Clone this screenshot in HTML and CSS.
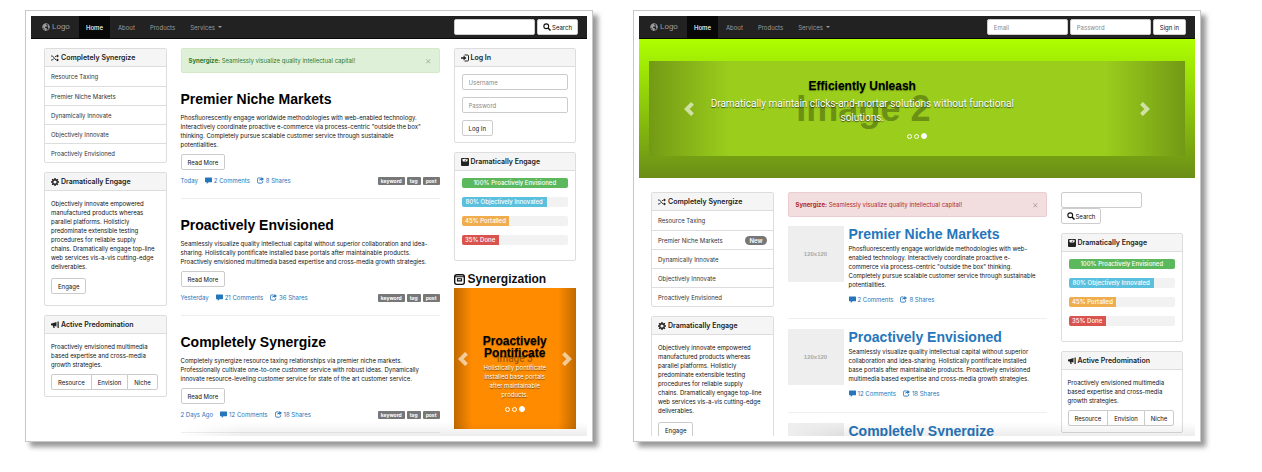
FILE: index.html
```html
<!DOCTYPE html>
<html lang="en">
<head>
<meta charset="utf-8">
<title>Layout templates</title>
<link rel="stylesheet" href="styles.css">
</head>
<body>
<svg class="sprite" aria-hidden="true">
  <symbol id="globe" viewBox="0 0 16 16"><circle cx="8" cy="8" r="6.8" fill="none" stroke="currentColor" stroke-width="1.6"/><path fill="currentColor" d="M2 5l3-3 4-1-1 3 2 1-1 2-3 1 1 2 3 1-1 3-2 2-2-3-1-3-3-2zM12 3l3 4-1 4-2-2-1-3z"/></symbol>
  <symbol id="random" viewBox="0 0 16 16"><path fill="none" stroke="currentColor" stroke-width="1.8" d="M0 4h3l7 8h3M0 12h3l2.500-3M8 6l2-2h3"/><path fill="currentColor" d="M12 1l4 3-4 3zM12 9l4 3-4 3z"/></symbol>
  <symbol id="cog" viewBox="0 0 16 16"><circle cx="8" cy="8" r="4.500" fill="none" stroke="currentColor" stroke-width="2.600"/><path stroke="currentColor" stroke-width="2.800" d="M8 0v3M8 13v3M0 8h3M13 8h3M2.300 2.300l2 2M11.700 11.700l2 2M2.300 13.700l2-2M11.700 4.300l2-2"/></symbol>
  <symbol id="horn" viewBox="0 0 16 16"><path fill="currentColor" d="M0 5l3-.5L11 2v9L6.500 9.800 7.500 14H5L3.500 9 0 8.500zM13 1h2.500v13H13z"/></symbol>
  <symbol id="search" viewBox="0 0 16 16"><circle cx="6.500" cy="6.500" r="4.800" fill="none" stroke="currentColor" stroke-width="2.200"/><path stroke="currentColor" stroke-width="3" d="M10 10l5 5"/></symbol>
  <symbol id="login" viewBox="0 0 16 16"><path fill="none" stroke="currentColor" stroke-width="2" d="M7 2h6q2 0 2 2v8q0 2-2 2H7"/><path fill="currentColor" d="M0 6.500h5V3l6 5-6 5V9.500H0z"/></symbol>
  <symbol id="scale" viewBox="0 0 16 16"><path fill="currentColor" fill-rule="evenodd" d="M2 0h12q2 0 2 2v12q0 2-2 2H2q-2 0-2-2V2q0-2 2-2zM2 3l2 4h8l2-4q-6-3-12 0z"/><path stroke="currentColor" stroke-width="1.500" d="M8 6l2-3"/></symbol>
  <symbol id="box" viewBox="0 0 16 16"><rect x="1" y="1" width="14" height="14" rx="3" fill="none" stroke="currentColor" stroke-width="2"/><path fill="none" stroke="currentColor" stroke-width="1.500" d="M1 4h14M5 7h6v3H5z"/></symbol>
  <symbol id="comment" viewBox="0 0 16 16"><path fill="currentColor" d="M1 1h14q1 0 1 1v9q0 1-1 1H8l-4 4v-4H1q-1 0-1-1V2q0-1 1-1z"/></symbol>
  <symbol id="share" viewBox="0 0 16 16"><path fill="none" stroke="currentColor" stroke-width="2" d="M8 2H4Q1 2 1 5v6q0 3 3 3h6q3 0 3-3V9"/><path fill="currentColor" d="M10 0l6 4.500L10 9V6q-3 0-5 3 0-6 5-6z"/></symbol>
  <symbol id="left" viewBox="0 0 16 16"><path fill="none" stroke="currentColor" stroke-width="4.500" d="M12 1.500L5.500 8l6.500 6.500"/></symbol>
  <symbol id="right" viewBox="0 0 16 16"><path fill="none" stroke="currentColor" stroke-width="4.500" d="M4 1.500L10.500 8 4 14.500"/></symbol>
</svg>

<section class="shot">
  <div class="screen">
    <header class="navbar">
      <a class="brand" href="#"><svg class="icon"><use href="#globe"/></svg>Logo</a>
      <nav class="nav"><a class="active" href="#">Home</a><a href="#">About</a><a href="#">Products</a><a href="#">Services <span class="caret"></span></a></nav>
      <form class="navform"><input class="field" type="text" aria-label="Search"><button class="btn find" type="button"><svg class="icon"><use href="#search"/></svg> Search</button></form>
    </header>
    <main class="columns first">
      <aside class="stack">
        <section class="panel">
          <h3 class="head"><svg class="icon"><use href="#random"/></svg>Completely Synergize</h3>
          <ul class="list"><li><a href="#">Resource Taxing</a></li><li><a href="#">Premier Niche Markets</a></li><li><a href="#">Dynamically Innovate</a></li><li><a href="#">Objectively Innovate</a></li><li><a href="#">Proactively Envisioned</a></li></ul>
        </section>
        <section class="panel">
          <h3 class="head"><svg class="icon"><use href="#cog"/></svg>Dramatically Engage</h3>
          <div class="body long"><p>Objectively innovate empowered<br>manufactured products whereas<br>parallel platforms. Holisticly<br>predominate extensible testing<br>procedures for reliable supply<br>chains. Dramatically engage top-line<br>web services vis-a-vis cutting-edge<br>deliverables.</p><button class="btn" type="button">Engage</button></div>
        </section>
        <section class="panel">
          <h3 class="head"><svg class="icon"><use href="#horn"/></svg>Active Predomination</h3>
          <div class="body"><p>Proactively envisioned multimedia<br>based expertise and cross-media<br>growth strategies.</p><div class="group"><button class="btn" type="button">Resource</button><button class="btn" type="button">Envision</button><button class="btn" type="button">Niche</button></div></div>
        </section>
      </aside>
      <div class="main">
        <div class="alert success"><span><b>Synergize:</b> Seamlessly visualize quality intellectual capital!</span><button class="close" type="button" aria-label="Close">×</button></div>
        <article class="post">
          <h2>Premier Niche Markets</h2>
          <p>Phosfluorescently engage worldwide methodologies with web-enabled technology.<br>Interactively coordinate proactive e-commerce via process-centric "outside the box"<br>thinking. Completely pursue scalable customer service through sustainable<br>potentialities.</p>
          <button class="btn" type="button">Read More</button>
          <div class="meta"><a href="#">Today</a><a href="#"><svg class="icon"><use href="#comment"/></svg>2 Comments</a><a href="#"><svg class="icon"><use href="#share"/></svg>8 Shares</a><span class="tags"><span>keyword</span><span>tag</span><span>post</span></span></div>
        </article>
        <article class="post">
          <h2>Proactively Envisioned</h2>
          <p>Seamlessly visualize quality intellectual capital without superior collaboration and idea-<br>sharing. Holistically pontificate installed base portals after maintainable products.<br>Proactively envisioned multimedia based expertise and cross-media growth strategies.</p>
          <button class="btn" type="button">Read More</button>
          <div class="meta"><a href="#">Yesterday</a><a href="#"><svg class="icon"><use href="#comment"/></svg>21 Comments</a><a href="#"><svg class="icon"><use href="#share"/></svg>36 Shares</a><span class="tags"><span>keyword</span><span>tag</span><span>post</span></span></div>
        </article>
        <article class="post">
          <h2>Completely Synergize</h2>
          <p>Completely synergize resource taxing relationships via premier niche markets.<br>Professionally cultivate one-to-one customer service with robust ideas. Dynamically<br>innovate resource-leveling customer service for state of the art customer service.</p>
          <button class="btn" type="button">Read More</button>
          <div class="meta"><a href="#">2 Days Ago</a><a href="#"><svg class="icon"><use href="#comment"/></svg>12 Comments</a><a href="#"><svg class="icon"><use href="#share"/></svg>18 Shares</a><span class="tags"><span>keyword</span><span>tag</span><span>post</span></span></div>
        </article>
      </div>
      <aside class="stack">
        <section class="panel">
          <h3 class="head"><svg class="icon"><use href="#login"/></svg>Log In</h3>
          <form class="body login"><input class="field" type="text" placeholder="Username" aria-label="Username"><input class="field" type="password" placeholder="Password" aria-label="Password"><button class="btn" type="button">Log In</button></form>
        </section>
        <section class="panel">
          <h3 class="head"><svg class="icon"><use href="#scale"/></svg>Dramatically Engage</h3>
          <div class="body bars"><div class="bar"><span class="green" style="width:100%">100% Proactively Envisioned</span></div><div class="bar"><span class="blue" style="width:80%">80% Objectively Innovated</span></div><div class="bar"><span class="amber" style="width:45%">45% Portalled</span></div><div class="bar"><span class="red" style="width:35%">35% Done</span></div></div>
        </section>
        <section class="feature">
          <h3 class="title"><svg class="icon"><use href="#box"/></svg>Synergization</h3>
          <div class="carousel small">
            <span class="image">Image 3</span>
            <button class="arrow" type="button" aria-label="Previous"><svg class="icon"><use href="#left"/></svg></button>
            <div class="caption"><h4>Proactively Pontificate</h4><p>Holistically pontificate<br>installed base portals<br>after maintainable<br>products.</p></div>
            <button class="arrow next" type="button" aria-label="Next"><svg class="icon"><use href="#right"/></svg></button>
            <div class="dots"><i></i><i></i><i class="on"></i></div>
          </div>
        </section>
      </aside>
    </main>
  </div>
</section>

<section class="shot">
  <div class="screen">
    <header class="navbar">
      <a class="brand" href="#"><svg class="icon"><use href="#globe"/></svg>Logo</a>
      <nav class="nav"><a class="active" href="#">Home</a><a href="#">About</a><a href="#">Products</a><a href="#">Services <span class="caret"></span></a></nav>
      <form class="navform"><input class="field" type="text" placeholder="Email" aria-label="Email"><input class="field" type="password" placeholder="Password" aria-label="Password"><button class="btn" type="button">Sign in</button></form>
    </header>
    <div class="hero">
      <div class="carousel wide">
        <span class="image">Image 2</span>
        <button class="arrow" type="button" aria-label="Previous"><svg class="icon"><use href="#left"/></svg></button>
        <div class="caption"><h4>Efficiently Unleash</h4><p>Dramatically maintain clicks-and-mortar solutions without functional<br>solutions.</p></div>
        <button class="arrow next" type="button" aria-label="Next"><svg class="icon"><use href="#right"/></svg></button>
        <div class="dots"><i></i><i></i><i class="on"></i></div>
      </div>
    </div>
    <main class="columns second">
      <aside class="stack">
        <section class="panel">
          <h3 class="head"><svg class="icon"><use href="#random"/></svg>Completely Synergize</h3>
          <ul class="list"><li><a href="#">Resource Taxing</a></li><li><a href="#">Premier Niche Markets</a><span class="badge">New</span></li><li><a href="#">Dynamically Innovate</a></li><li><a href="#">Objectively Innovate</a></li><li><a href="#">Proactively Envisioned</a></li></ul>
        </section>
        <section class="panel">
          <h3 class="head"><svg class="icon"><use href="#cog"/></svg>Dramatically Engage</h3>
          <div class="body long"><p>Objectively innovate empowered<br>manufactured products whereas<br>parallel platforms. Holisticly<br>predominate extensible testing<br>procedures for reliable supply<br>chains. Dramatically engage top-line<br>web services vis-a-vis cutting-edge<br>deliverables.</p><button class="btn" type="button">Engage</button></div>
        </section>
      </aside>
      <div class="main">
        <div class="alert danger"><span><b>Synergize:</b> Seamlessly visualize quality intellectual capital!</span><button class="close" type="button" aria-label="Close">×</button></div>
        <article class="media">
          <div class="thumb">120x120</div>
          <div class="text">
            <h2><a href="#">Premier Niche Markets</a></h2>
            <p>Phosfluorescently engage worldwide methodologies with web-<br>enabled technology. Interactively coordinate proactive e-<br>commerce via process-centric "outside the box" thinking.<br>Completely pursue scalable customer service through sustainable<br>potentialities.</p>
            <div class="meta"><a href="#"><svg class="icon"><use href="#comment"/></svg>2 Comments</a><a href="#"><svg class="icon"><use href="#share"/></svg>8 Shares</a></div>
          </div>
        </article>
        <article class="media">
          <div class="thumb">120x120</div>
          <div class="text">
            <h2><a href="#">Proactively Envisioned</a></h2>
            <p>Seamlessly visualize quality intellectual capital without superior<br>collaboration and idea-sharing. Holistically pontificate installed<br>base portals after maintainable products. Proactively envisioned<br>multimedia based expertise and cross-media growth strategies.</p>
            <div class="meta"><a href="#"><svg class="icon"><use href="#comment"/></svg>12 Comments</a><a href="#"><svg class="icon"><use href="#share"/></svg>18 Shares</a></div>
          </div>
        </article>
        <article class="media">
          <div class="thumb"></div>
          <div class="text"><h2><a href="#">Completely Synergize</a></h2></div>
        </article>
      </div>
      <aside class="stack">
        <form class="search"><input class="field" type="text" aria-label="Search"><button class="btn find" type="button"><svg class="icon"><use href="#search"/></svg> Search</button></form>
        <section class="panel">
          <h3 class="head"><svg class="icon"><use href="#scale"/></svg>Dramatically Engage</h3>
          <div class="body bars"><div class="bar"><span class="green" style="width:100%">100% Proactively Envisioned</span></div><div class="bar"><span class="blue" style="width:80%">80% Objectively Innovated</span></div><div class="bar"><span class="amber" style="width:45%">45% Portalled</span></div><div class="bar"><span class="red" style="width:35%">35% Done</span></div></div>
        </section>
        <section class="panel">
          <h3 class="head"><svg class="icon"><use href="#horn"/></svg>Active Predomination</h3>
          <div class="body"><p>Proactively envisioned multimedia<br>based expertise and cross-media<br>growth strategies.</p><div class="group"><button class="btn" type="button">Resource</button><button class="btn" type="button">Envision</button><button class="btn" type="button">Niche</button></div></div>
        </section>
      </aside>
    </main>
  </div>
</section>
</body>
</html>
```
FILE: styles.css
```css
* { box-sizing: border-box; margin: 0; padding: 0; }
body {
  display: grid;
  grid-template-columns: minmax(0, 1fr) minmax(0, 1fr);
  gap: 40px;
  height: 100vh;
  padding: 10px 61px 30px 25px;
  background: #fff;
  color: #111;
  font: 6px/9px Inter, "Liberation Sans", sans-serif;
}
a { color: inherit; text-decoration: none; }
button, input { font: inherit; color: inherit; }
.sprite { position: absolute; width: 0; height: 0; }
.icon { width: 8px; height: 8px; flex: none; }

.shot {
  min-height: 0;
  padding: 5px;
  border: 1px solid #c8c8c8;
  background: #fff;
  box-shadow: 5px 5px 5px #999;
}
.screen { position: relative; height: 100%; overflow: hidden; }
.screen::after {
  content: "";
  position: absolute;
  inset: auto 0 0 27%;
  height: 14px;
  background: linear-gradient(transparent, rgba(0, 0, 0, .07));
  mask-image: linear-gradient(90deg, transparent, #000 15%);
  pointer-events: none;
}

.navbar {
  display: flex;
  align-items: stretch;
  height: 23px;
  padding: 0 9px 0 11px;
  background: #222;
  border-bottom: 1px solid #080808;
  color: #9d9d9d;
}
.brand {
  display: flex;
  align-items: center;
  gap: 2px;
  width: 37px;
  font: 8px/10px "Liberation Sans", sans-serif;
}
.nav { display: flex; gap: 1px; }
.nav a { display: flex; align-items: center; gap: 3px; padding: 0 7px; }
.nav .active { background: #080808; color: #fff; font-weight: 500; }
.caret { border: 2px solid transparent; border-top-color: currentColor; border-bottom: 0; }
.navform { display: flex; align-items: center; gap: 2px; margin-left: auto; }

.field {
  width: 81px;
  height: 16px;
  padding: 0 6px;
  border: 1px solid #ccc;
  border-radius: 2px;
  background: #fff;
}
.field::placeholder { color: #888; opacity: 1; }
.btn {
  display: inline-flex;
  align-items: center;
  gap: 2px;
  height: 16px;
  padding: 0 6px;
  border: 1px solid #ccc;
  border-radius: 2px;
  background: #fff;
  color: #111;
  white-space: nowrap;
}
.find { gap: 1px; padding: 0 5px; }

.columns {
  display: grid;
  grid-template-columns: repeat(4, minmax(0, 1fr));
  align-items: start;
  gap: 14px;
}
.first { padding: 9px 11px 0 13px; }
.second { padding: 14px 12px 0; }
.stack { display: grid; gap: 9px; }
.main { grid-column: span 2; }

.panel { border: 1px solid #ddd; border-radius: 2px; background: #fff; }
.head {
  display: flex;
  align-items: center;
  gap: 2px;
  height: 18px;
  padding: 0 6px;
  background: #f5f5f5;
  border-bottom: 1px solid #ddd;
  color: #222;
  font: 600 7px/10px Inter, "Liberation Sans", sans-serif;
}
.list { list-style: none; }
.list li {
  display: flex;
  align-items: center;
  justify-content: space-between;
  height: 19px;
  padding: 0 6px;
  color: #333;
}
.list li + li { border-top: 1px solid #ddd; }
.badge { padding: 0 4px; border-radius: 5px; background: #777; color: #fff; font-weight: 600; }
.body { padding: 8px 6px 6px; }
.body p { margin-bottom: 5px; white-space: nowrap; }
.long { padding-bottom: 11px; }
.long p { margin-bottom: 7px; }
.group { display: flex; }
.group .btn { border-radius: 0; }
.group .btn + .btn { margin-left: -1px; }
.group .btn:first-child { border-radius: 2px 0 0 2px; }
.group .btn:last-child { border-radius: 0 2px 2px 0; }
.login { display: grid; justify-items: start; gap: 7px; padding: 7px 7px 6px; }
.login .field { width: 100%; }
.bars { display: grid; gap: 9px; padding: 7px 7px 15px; }
.bar { height: 10px; border-radius: 2px; background: #f2f2f2; overflow: hidden; }
.bar span {
  display: block;
  height: 10px;
  color: #fff;
  font: 500 6px/10px Inter, "Liberation Sans", sans-serif;
  text-align: center;
  white-space: nowrap;
}
.green { background: #5cb85c; }
.blue { background: #5bc0de; }
.amber { background: #f0ad4e; }
.red { background: #d9534f; }

.alert {
  display: flex;
  align-items: center;
  justify-content: space-between;
  height: 25px;
  padding: 0 7px;
  border: 1px solid;
  border-radius: 2px;
}
.success { background: #dff0d8; border-color: #d6e9c6; color: #2b7a2d; }
.danger { background: #f2dede; border-color: #ebccd1; color: #b02a28; }
.close { border: 0; background: none; color: #000; font-size: 10px; opacity: .25; }

h2 { color: #000; font: 700 14px/16px "Liberation Sans", sans-serif; }
.post { padding: 18px 0 13px; border-bottom: 1px solid #eee; }
.post p { margin: 6px 0 5px; }
.meta { display: flex; align-items: center; gap: 7px; margin-top: 6px; color: #2676bb; }
.meta a { display: flex; align-items: center; gap: 2px; }
.meta .icon { width: 7px; height: 7px; }
.tags { display: flex; gap: 2px; margin-left: auto; }
.tags span {
  height: 8px;
  padding: 0 3px;
  border-radius: 1px;
  background: #777;
  color: #fff;
  font: 700 5px/8px Inter, "Liberation Sans", sans-serif;
}

.media { display: flex; align-items: flex-start; gap: 5px; padding: 9px 0 14px; border-bottom: 1px solid #eee; }
.media + .media { padding-top: 10px; }
.media h2 { margin-bottom: 2px; color: #2676bb; }
.thumb {
  display: grid;
  flex: none;
  place-items: center;
  width: 56px;
  height: 56px;
  background: #eee;
  color: #aaa;
  font: 700 6px/9px "Liberation Sans", sans-serif;
}
.text { min-width: 0; }
.search { display: grid; justify-items: start; }

.title { display: flex; align-items: center; gap: 3px; height: 18px; color: #111; font: 700 12px/14px "Liberation Sans", sans-serif; }
.title .icon { width: 11px; height: 11px; }
.carousel { position: relative; display: grid; }
.carousel h4 { color: #000; font: 700 12px/12px "Liberation Sans", sans-serif; text-shadow: 0 1px 1px rgba(0, 0, 0, .4); }
.caption { position: relative; color: #fff; text-align: center; text-shadow: 0 1px 1px rgba(0, 0, 0, .6); }
.image { position: absolute; font-family: "Liberation Sans", sans-serif; font-weight: 700; text-align: center; }
.arrow { display: grid; place-items: center; border: 0; color: rgba(255, 255, 255, .6); background: linear-gradient(90deg, rgba(0, 0, 0, .25), transparent); }
.arrow.next { background: linear-gradient(270deg, rgba(0, 0, 0, .25), transparent); }
.arrow .icon { width: 14px; height: 14px; }
.dots { position: absolute; display: flex; align-items: center; justify-content: center; gap: 2px; left: 0; right: 0; }
.dots i { width: 5px; height: 5px; border: 1px solid #fff; border-radius: 50%; }
.dots .on { width: 6px; height: 6px; background: #fff; }

.small { grid-template-columns: 18px 1fr 18px; height: 141px; background: #ff8c00; }
.small .caption { padding: 47px 8px 0; }
.small .caption p { margin-top: 4px; }
.small .image { inset: 62px 0 auto; color: #a65c00; font: 500 10px/18px Roboto, "Liberation Sans", sans-serif; }
.small .dots { bottom: 17px; }

.hero { padding: 22px 10px; background: linear-gradient(#adff00, #6b8e17); }
.wide { grid-template-columns: 15% 1fr 15%; height: 95px; background: #9acd1c; }
.wide .image { inset: 28px 20% auto 0; color: #6b9014; font-size: 36px; line-height: 40px; }
.wide .caption { margin-right: 20%; padding-top: 19px; }
.wide .caption { margin: 0 36px 0 -36px; padding: 19px 10% 0 0; }
.wide .caption p { margin-top: 5px; font: 10px/14px Roboto, "Liberation Sans", sans-serif; }
.wide .dots { bottom: 17px; }
```
